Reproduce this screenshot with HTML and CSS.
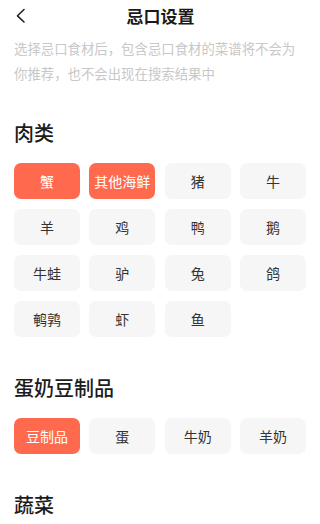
FILE: index.html
```html
<!DOCTYPE html>
<html lang="zh-CN">
<head>
<meta charset="utf-8">
<meta name="viewport" content="width=device-width, initial-scale=1">
<title>忌口设置</title>
<link rel="stylesheet" href="styles.css">
</head>
<body>
<div class="page">
  <header class="topbar">
    <span class="back" aria-label="返回">
      <svg width="32" height="32" viewBox="0 0 32 32"><polyline points="24,9.5 17.5,15.8 24,22" fill="none" stroke="#222" stroke-width="1.6" stroke-linecap="round" stroke-linejoin="round"/></svg>
    </span>
    <h1 class="title">忌口设置</h1>
  </header>
  <p class="desc">选择忌口食材后，包含忌口食材的菜谱将不会为你推荐，也不会出现在搜索结果中</p>

  <section class="group first">
    <h2 class="group-title">肉类</h2>
    <div class="chips">
      <span class="chip on">蟹</span>
      <span class="chip on">其他海鲜</span>
      <span class="chip">猪</span>
      <span class="chip">牛</span>
      <span class="chip">羊</span>
      <span class="chip">鸡</span>
      <span class="chip">鸭</span>
      <span class="chip">鹅</span>
      <span class="chip">牛蛙</span>
      <span class="chip">驴</span>
      <span class="chip">兔</span>
      <span class="chip">鸽</span>
      <span class="chip">鹌鹑</span>
      <span class="chip">虾</span>
      <span class="chip">鱼</span>
    </div>
  </section>

  <section class="group">
    <h2 class="group-title">蛋奶豆制品</h2>
    <div class="chips">
      <span class="chip on">豆制品</span>
      <span class="chip">蛋</span>
      <span class="chip">牛奶</span>
      <span class="chip">羊奶</span>
    </div>
  </section>

  <section class="group">
    <h2 class="group-title">蔬菜</h2>
  </section>
</div>
</body>
</html>
```

FILE: styles.css
```css
* { box-sizing: border-box; }
html, body {
  margin: 0;
  padding: 0;
  background: #ffffff;
}
body {
  font-family: "Noto Sans CJK SC", "Noto Sans", sans-serif;
  color: #222;
  overflow: hidden;
}
.page {
  width: 320px;
  padding: 0 14px;
}
.topbar {
  position: relative;
  height: 32px;
  display: flex;
  align-items: center;
  justify-content: center;
}
.back {
  position: absolute;
  left: -14px;
  top: 0;
  width: 32px;
  height: 32px;
  display: block;
}
.back svg { display: block; }
.title {
  margin: 0;
  font-size: 17px;
  font-weight: 700;
  line-height: 32px;
  color: #1a1a1a;
  padding-left: 1px;
}
.desc {
  margin: 4px 0 0;
  font-size: 13.4px;
  line-height: 25px;
  color: #c8c8c8;
}
.group { margin-top: 37px; }
.group.first { margin-top: 33px; }
.group-title {
  margin: 0 0 16px;
  font-size: 20px;
  line-height: 28px;
  font-weight: 500;
  color: #1c1c1c;
}
.chips {
  display: grid;
  grid-template-columns: repeat(4, 1fr);
  column-gap: 9.5px;
  row-gap: 10px;
}
.chip {
  height: 36px;
  border-radius: 7px;
  background: #f6f6f6;
  color: #333;
  font-size: 14px;
  display: flex;
  align-items: center;
  justify-content: center;
  white-space: nowrap;
}
.chip.on {
  background: #ff6a4f;
  color: #ffffff;
}
```
